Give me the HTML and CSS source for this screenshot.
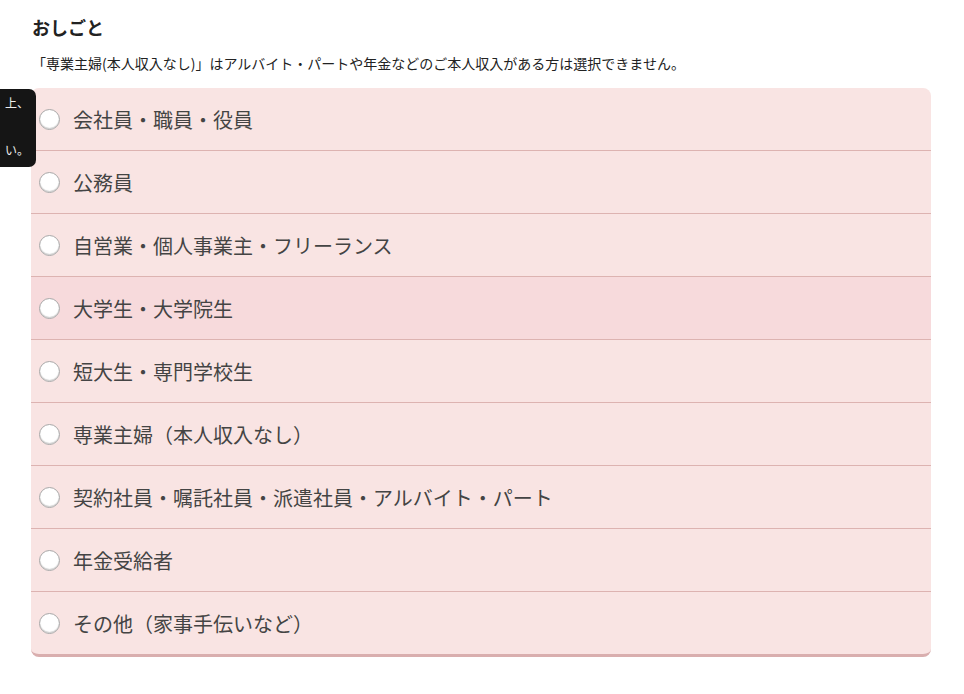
FILE: index.html
```html
<!DOCTYPE html>
<html lang="ja">
<head>
  <meta charset="UTF-8">
  <title>おしごと</title>
  <link rel="stylesheet" href="styles.css">
</head>
<body>

  <div class="tooltip"><p>上、</p><p>い。</p></div>

  <section class="job">
    <h2>おしごと</h2>
    <p class="note">「専業主婦(本人収入なし)」はアルバイト・パートや年金などのご本人収入がある方は選択できません。</p>

    <div class="choices">
      <label class="choice"><input type="radio" name="job"><span>会社員・職員・役員</span></label>
      <label class="choice"><input type="radio" name="job"><span>公務員</span></label>
      <label class="choice"><input type="radio" name="job"><span>自営業・個人事業主・フリーランス</span></label>
      <label class="choice hover"><input type="radio" name="job"><span>大学生・大学院生</span></label>
      <label class="choice"><input type="radio" name="job"><span>短大生・専門学校生</span></label>
      <label class="choice"><input type="radio" name="job"><span>専業主婦（本人収入なし）</span></label>
      <label class="choice"><input type="radio" name="job"><span>契約社員・嘱託社員・派遣社員・アルバイト・パート</span></label>
      <label class="choice"><input type="radio" name="job"><span>年金受給者</span></label>
      <label class="choice"><input type="radio" name="job"><span>その他（家事手伝いなど）</span></label>
    </div>
  </section>

</body>
</html>
```

FILE: styles.css
```css
body {
  margin: 0;
  font-family: "Noto Sans CJK JP", "Noto Sans", sans-serif;
  color: #333;
  background: #fff;
  position: relative;
}
.job {
  padding: 14px 33px 0 31px;
}
h2 {
  margin: 0 0 0 1px;
  font-size: 18px;
  line-height: 26px;
  font-weight: bold;
  color: #222;
}
.note {
  margin: 11px 0 13px 1px;
  font-size: 14px;
  line-height: 24px;
  color: #222;
}
.choices {
  background-color: #f9e4e3;
  border-radius: 8px;
  border-bottom: 3px solid #d9aeae;
  overflow: hidden;
}
.choice {
  display: flex;
  align-items: center;
  height: 62px;
  padding-left: 8px;
  border-bottom: 1px solid #ddb3b1;
  cursor: pointer;
}
.choice:last-child {
  border-bottom: none;
}
.choice.hover {
  background-color: #f7dadc;
}
.choice input {
  appearance: none;
  margin: 0 13px 0 0;
  width: 21px;
  height: 21px;
  border-radius: 50%;
  border: 1px solid #a8a8a8;
  background: #fff;
  box-shadow: inset 0 -1px 1px rgba(0, 0, 0, 0.2);
  flex-shrink: 0;
}
.choice span {
  font-size: 20px;
  color: #444;
}
.tooltip {
  position: absolute;
  top: 89px;
  left: -40px;
  width: 76px;
  height: 78px;
  box-sizing: border-box;
  background: #151515;
  border-radius: 7px;
  color: #eee;
  font-size: 12px;
  text-align: right;
  padding: 4px 7px 0 0;
  z-index: 2;
}
.tooltip p {
  margin: 0 0 27px;
  line-height: 20px;
}
```
